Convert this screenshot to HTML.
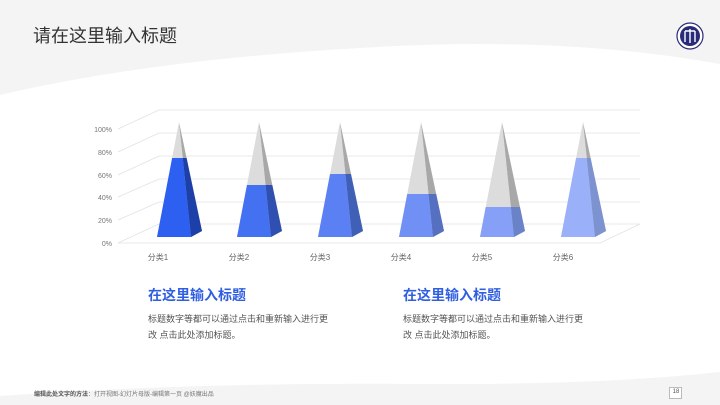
<!DOCTYPE html>
<html><head><meta charset="utf-8"><style>
body{margin:0;width:720px;height:405px;overflow:hidden;position:relative;background:#fff;font-family:"Liberation Sans","Noto Sans CJK SC",sans-serif}
.t{position:absolute;white-space:nowrap}
</style></head><body>
<svg width="720" height="405" style="position:absolute;left:0;top:0">
<defs>
<linearGradient id="g" x1="0" x2="1"><stop offset="0" stop-color="#dedede"/><stop offset="1" stop-color="#cfcfcf"/></linearGradient>
</defs>
<path d="M0 0H720V64Q560 35 360 48Q150 60 0 95Z" fill="#f4f4f4"/>
<path d="M0 405V396Q200 382 420 384Q600 385 720 372V405Z" fill="#f4f4f4"/>
<g stroke="#e2e2e2" stroke-width="0.8" fill="none">
<path d="M159 110H640M159 133H640M159 156H640M159 179H640M159 202H640M159 224H640"/>
<path d="M118 129L159 110M118 152L159 133M118 175L159 156M118 197L159 179M118 220L159 202M118 243L159 224"/>
<path d="M118 243H600L640 224"/>
</g>
<g font-size="7" fill="#777" text-anchor="end" font-family="Liberation Sans,sans-serif">
<text x="112" y="132">100%</text><text x="112" y="155">80%</text><text x="112" y="178">60%</text><text x="112" y="200">40%</text><text x="112" y="223">20%</text><text x="112" y="246">0%</text>
</g>
<g id="p"></g>
</svg>
<svg width="720" height="405" style="position:absolute;left:0;top:0">
<defs>
<clipPath id="c1"><rect x="0" y="158" width="720" height="100"/></clipPath>
<clipPath id="c2"><rect x="0" y="185" width="720" height="100"/></clipPath>
<clipPath id="c3"><rect x="0" y="174" width="720" height="100"/></clipPath>
<clipPath id="c4"><rect x="0" y="194" width="720" height="100"/></clipPath>
<clipPath id="c5"><rect x="0" y="207" width="720" height="100"/></clipPath>
<clipPath id="c6"><rect x="0" y="158" width="720" height="100"/></clipPath>
</defs>
<!-- pyramids: L, front width 34, side 11 up 6, apex L+22,122 -->
<g>
<path d="M157 237H191L179 122Z" fill="#dcdcdc"/><path d="M191 237L202 231L179 122Z" fill="#a8a8a8"/>
<g clip-path="url(#c1)"><path d="M157 237H191L179 122Z" fill="#2d5ff0"/><path d="M191 237L202 231L179 122Z" fill="#1d3fa8"/></g>
<path d="M237 237H271L259 122Z" fill="#dcdcdc"/><path d="M271 237L282 231L259 122Z" fill="#a8a8a8"/>
<g clip-path="url(#c2)"><path d="M237 237H271L259 122Z" fill="#4470f2"/><path d="M271 237L282 231L259 122Z" fill="#2f50b0"/></g>
<path d="M318 237H352L340 122Z" fill="#dcdcdc"/><path d="M352 237L363 231L340 122Z" fill="#a8a8a8"/>
<g clip-path="url(#c3)"><path d="M318 237H352L340 122Z" fill="#5a80f3"/><path d="M352 237L363 231L340 122Z" fill="#4060b8"/></g>
<path d="M399 237H433L421 122Z" fill="#dcdcdc"/><path d="M433 237L444 231L421 122Z" fill="#a8a8a8"/>
<g clip-path="url(#c4)"><path d="M399 237H433L421 122Z" fill="#7090f5"/><path d="M433 237L444 231L421 122Z" fill="#5570c0"/></g>
<path d="M480 237H514L502 122Z" fill="#dcdcdc"/><path d="M514 237L525 231L502 122Z" fill="#a8a8a8"/>
<g clip-path="url(#c5)"><path d="M480 237H514L502 122Z" fill="#85a0f6"/><path d="M514 237L525 231L502 122Z" fill="#6a82c8"/></g>
<path d="M561 237H595L583 122Z" fill="#dcdcdc"/><path d="M595 237L606 231L583 122Z" fill="#a8a8a8"/>
<g clip-path="url(#c6)"><path d="M561 237H595L583 122Z" fill="#9ab0f8"/><path d="M595 237L606 231L583 122Z" fill="#7d92d0"/></g>
</g>
<g font-size="8" fill="#666" text-anchor="middle" font-family="Liberation Sans,Noto Sans CJK SC,sans-serif">
<text x="158" y="260">分类1</text><text x="239" y="260">分类2</text><text x="320" y="260">分类3</text><text x="401" y="260">分类4</text><text x="482" y="260">分类5</text><text x="563" y="260">分类6</text>
</g>
<circle cx="690" cy="36" r="13" fill="#fff" stroke="#2a2a7a" stroke-width="1.2"/>
<circle cx="690" cy="36" r="10" fill="#2a2a7a"/>
<path d="M685 31V42M695 31V42M685 31H695M690 29V43" stroke="#fff" stroke-width="1.4" fill="none"/>
<rect x="669.5" y="387.5" width="12" height="11" fill="#fff" stroke="#bbb"/>
</svg>
<div class="t" style="left:33px;top:22px;font-size:18px;color:#333">请在这里输入标题</div>
<div class="t" style="left:148px;top:285px;font-size:14px;font-weight:bold;color:#2f5ee0">在这里输入标题</div>
<div class="t" style="left:148px;top:311px;font-size:9px;color:#555;line-height:16px">标题数字等都可以通过点击和重新输入进行更<br>改 点击此处添加标题。</div>
<div class="t" style="left:403px;top:285px;font-size:14px;font-weight:bold;color:#2f5ee0">在这里输入标题</div>
<div class="t" style="left:403px;top:311px;font-size:9px;color:#555;line-height:16px">标题数字等都可以通过点击和重新输入进行更<br>改 点击此处添加标题。</div>
<div class="t" style="left:34px;top:389px;font-size:6px;color:#777"><b style="color:#555">编辑此处文字的方法</b>：打开视图-幻灯片母版-编辑第一页 @妖魔出品</div>
<div class="t" style="left:670px;top:389px;width:12px;text-align:center;font-size:6px;color:#555">18</div>
</body></html>
